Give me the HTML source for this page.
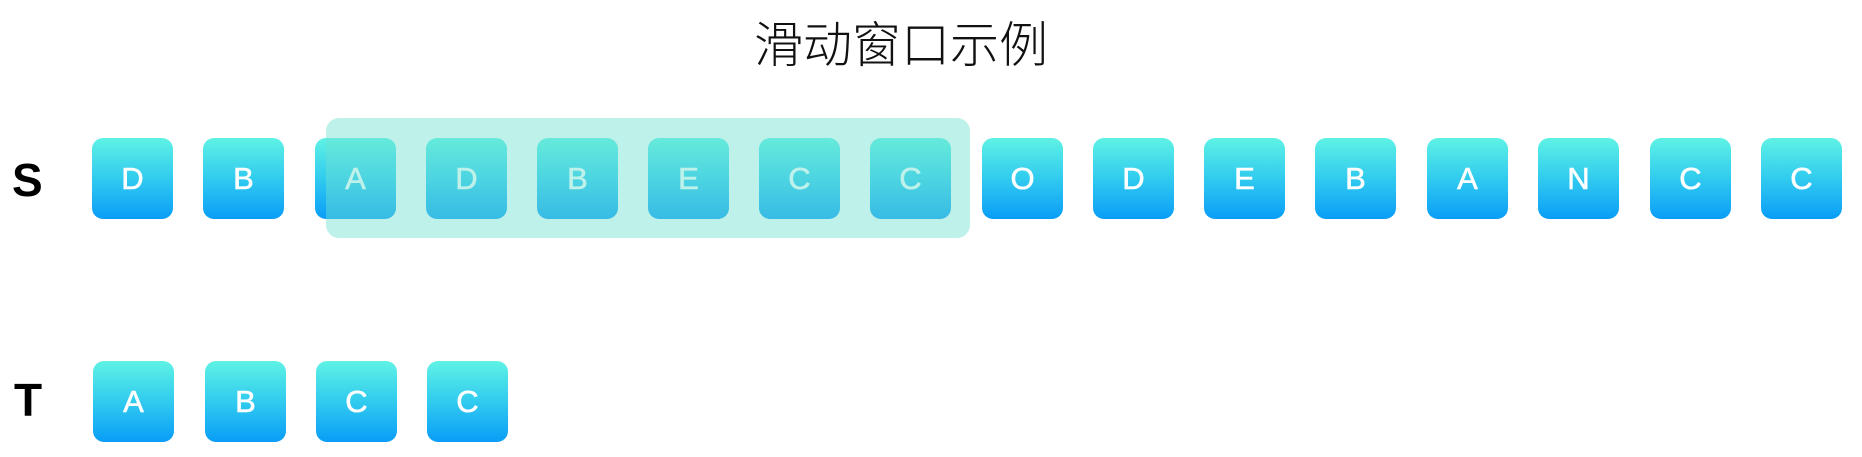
<!DOCTYPE html>
<html><head><meta charset="utf-8"><style>
html,body{margin:0;padding:0;background:#fff;}
body{width:1862px;height:457px;position:relative;overflow:hidden;font-family:"Liberation Sans",sans-serif;}
.t{position:absolute;left:754px;top:6px;white-space:nowrap;font:300 49px "Liberation Sans","Noto Sans CJK SC",sans-serif;color:#111;}
.lab{position:absolute;font:bold 46px "Liberation Sans",sans-serif;color:#000;}
.b{position:absolute;width:81px;height:81px;border-radius:11px;background:linear-gradient(#5ff2e4,#31cbef 50%,#0a9df7);color:#fff;font:normal 31px "Liberation Sans",sans-serif;-webkit-text-stroke:0.6px #fff;line-height:81px;text-align:center;}
.w{position:absolute;left:326px;top:118px;width:644px;height:120px;border-radius:13px;background:rgba(110,225,208,0.45);}
</style></head><body>
<div class="t">滑动窗口示例</div>
<div class="lab" style="left:12px;top:153px;">S</div>
<div class="lab" style="left:14px;top:373px;">T</div>
<div class="b" style="left:92px;top:138px">D</div>
<div class="b" style="left:203px;top:138px">B</div>
<div class="b" style="left:315px;top:138px">A</div>
<div class="b" style="left:426px;top:138px">D</div>
<div class="b" style="left:537px;top:138px">B</div>
<div class="b" style="left:648px;top:138px">E</div>
<div class="b" style="left:759px;top:138px">C</div>
<div class="b" style="left:870px;top:138px">C</div>
<div class="b" style="left:982px;top:138px">O</div>
<div class="b" style="left:1093px;top:138px">D</div>
<div class="b" style="left:1204px;top:138px">E</div>
<div class="b" style="left:1315px;top:138px">B</div>
<div class="b" style="left:1427px;top:138px">A</div>
<div class="b" style="left:1538px;top:138px">N</div>
<div class="b" style="left:1650px;top:138px">C</div>
<div class="b" style="left:1761px;top:138px">C</div>
<div class="w"></div>
<div class="b" style="left:93px;top:361px">A</div>
<div class="b" style="left:205px;top:361px">B</div>
<div class="b" style="left:316px;top:361px">C</div>
<div class="b" style="left:427px;top:361px">C</div>
</body></html>
